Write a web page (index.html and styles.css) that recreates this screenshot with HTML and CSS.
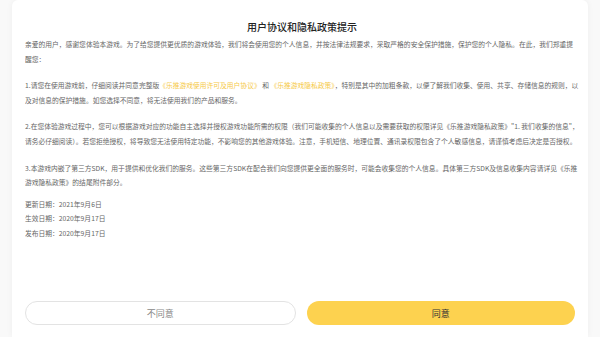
FILE: index.html
```html
<!DOCTYPE html>
<html lang="zh">
<head>
<meta charset="utf-8">
<link rel="stylesheet" href="styles.css">
</head>
<body>
<div class="card">
  <h1 class="title">用户协议和隐私政策提示</h1>
  <div class="content">
    <p class="para">亲爱的用户，感谢您体验本游戏。为了给您提供更优质的游戏体验，我们将会使用您的个人信息，并按法律法规要求，采取严格的安全保护措施，保护您的个人隐私。在此，我们郑重提<br>醒您：</p>
    <p class="para">1.请您在使用游戏前，仔细阅读并同意完整版<span class="link">《乐推游戏使用许可及用户协议》</span> 和 <span class="link">《乐推游戏隐私政策》</span>，特别是其中的加粗条款，以便了解我们收集、使用、共享、存储信息的规则，以<br>及对信息的保护措施。如您选择不同意，将无法使用我们的产品和服务。</p>
    <p class="para">2.在您体验游戏过程中，您可以根据游戏对应的功能自主选择并授权游戏功能所需的权限（我们可能收集的个人信息以及需要获取的权限详见《乐推游戏隐私政策》"1. 我们收集的信息"，<br>请务必仔细阅读）。若您拒绝授权，将导致您无法使用特定功能，不影响您的其他游戏体验。注意，手机短信、地理位置、通讯录权限包含了个人敏感信息，请谨慎考虑后决定是否授权。</p>
    <p class="para">3.本游戏内嵌了第三方SDK，用于提供和优化我们的服务。这些第三方SDK在配合我们向您提供更全面的服务时，可能会收集您的个人信息。具体第三方SDK及信息收集内容请详见《乐推<br>游戏隐私政策》的结尾附件部分。</p>
    <p class="para dates">更新日期：2021年9月6日<br>生效日期：2020年9月17日<br>发布日期：2020年9月17日</p>
  </div>
  <div class="actions">
    <button class="btn btn-decline">不同意</button>
    <button class="btn btn-accept">同意</button>
  </div>
</div>
</body>
</html>
```

FILE: styles.css
```css
html, body {
  margin: 0;
  padding: 0;
  background: #f9f9f9;
  font-family: "Noto Sans CJK SC", "Noto Sans", sans-serif;
}
.card {
  margin: 0 12px;
  height: 337px;
  background: #fff;
  box-shadow: 0 0 6px rgba(0,0,0,0.05);
  border-radius: 6px 6px 0 0;
  padding: 0 9px 0 13px;
  box-sizing: border-box;
  display: flex;
  flex-direction: column;
}
.title {
  margin: 0;
  padding-top: 19px;
  height: 37px;
  box-sizing: border-box;
  text-align: center;
  font-size: 10px;
  line-height: 16px;
  font-weight: 500;
  color: #222;
}
.content {
  overflow: hidden;
  height: 249px;
}
.para {
  margin: 0 0 12px;
  font-size: 6.77px;
  line-height: 14.6px;
  color: #666;
  white-space: nowrap;
}
.dates {
  margin-top: -5px;
}
.link {
  color: #f6c945;
}
.actions {
  display: flex;
  gap: 11px;
  padding-top: 15px;
  padding-right: 4px;
}
.btn {
  flex: 1;
  height: 24px;
  border-radius: 12px;
  font-family: inherit;
  font-size: 9px;
  cursor: pointer;
}
.btn-decline {
  background: #fff;
  border: 1px solid #e3e3e3;
  color: #888;
}
.btn-accept {
  background: #fdd24f;
  border: none;
  color: #333;
}
```
